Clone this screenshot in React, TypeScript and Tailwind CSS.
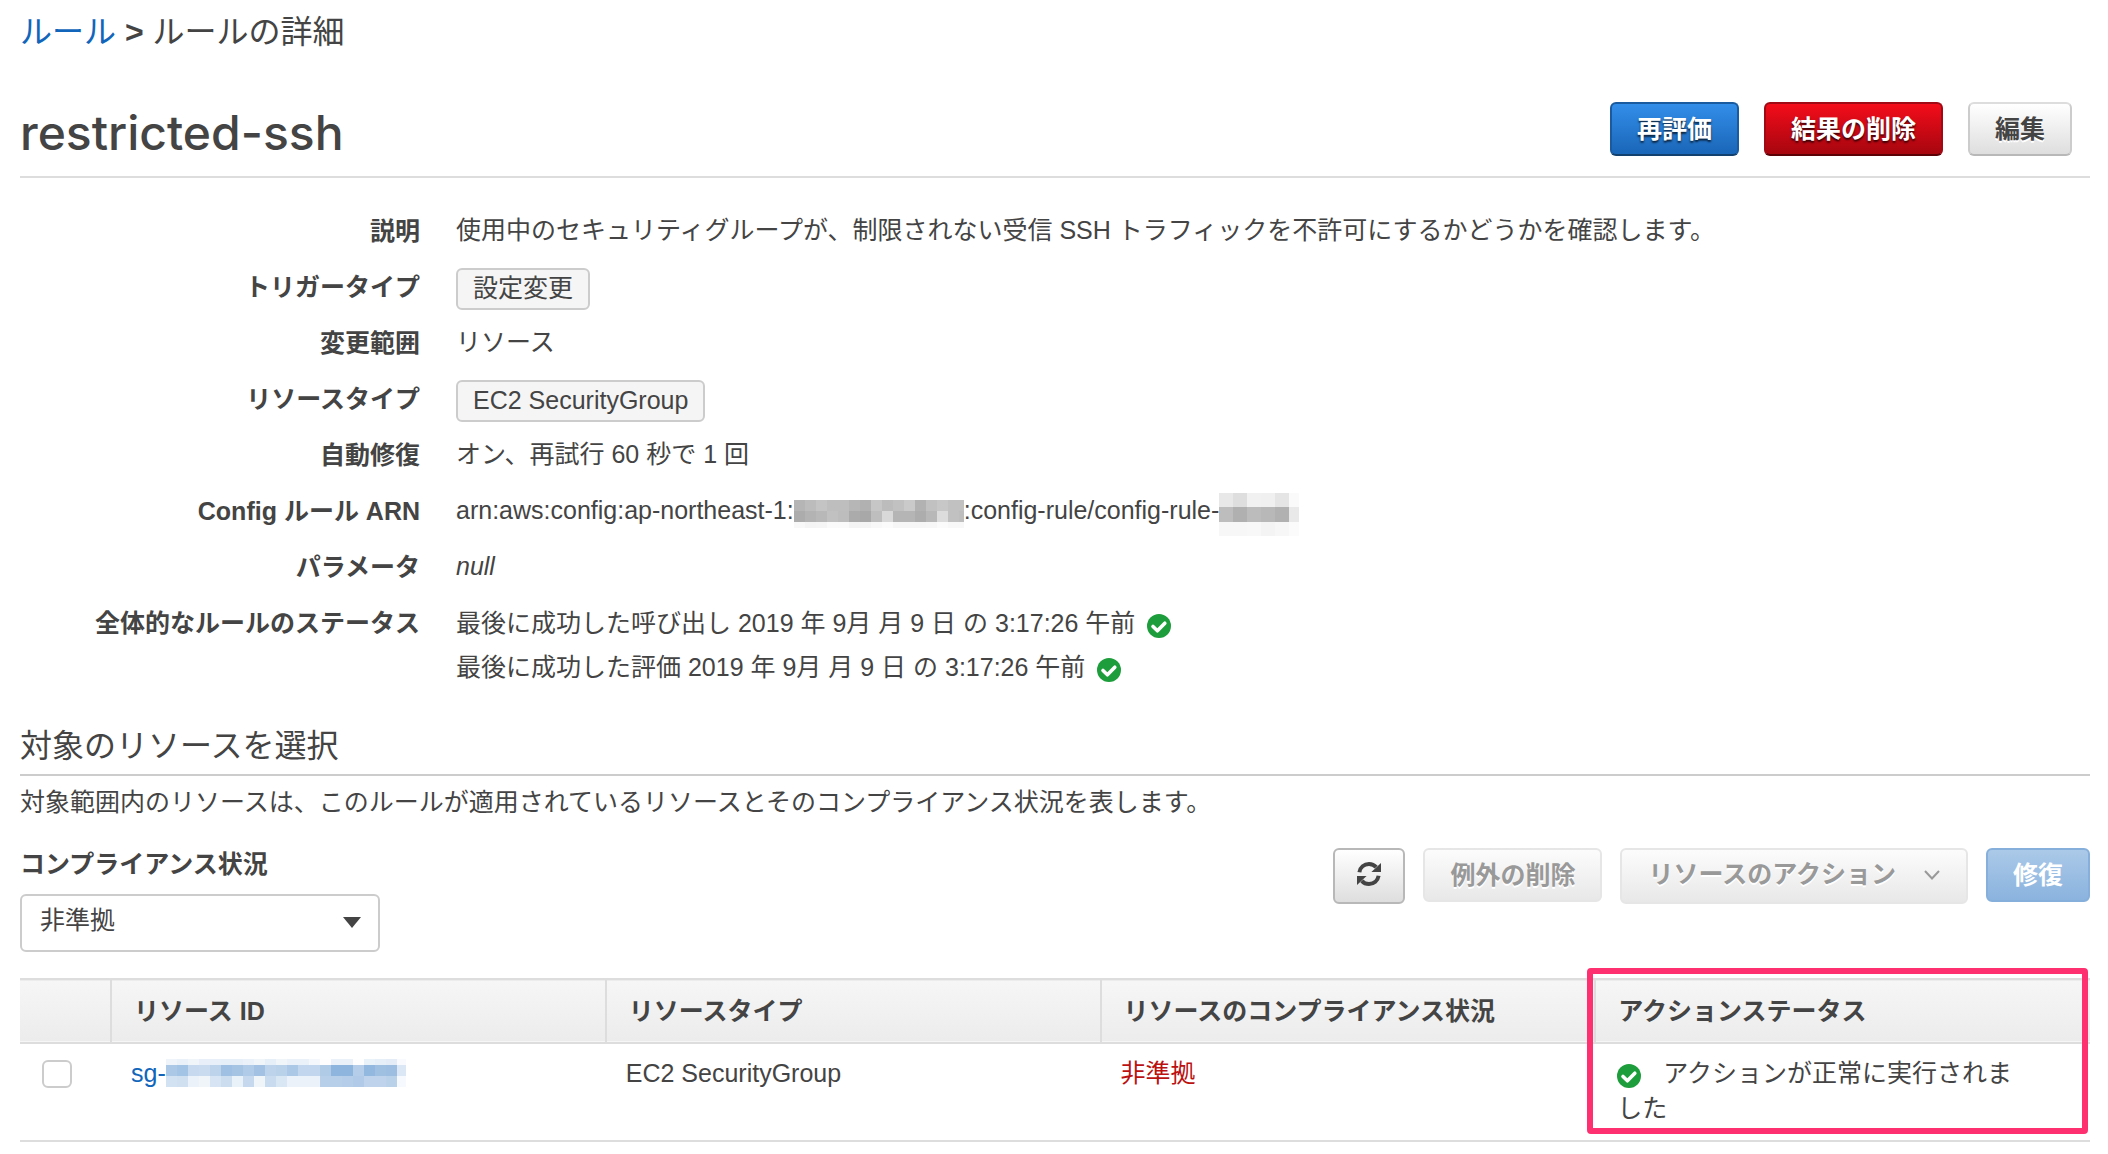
import React, { useState } from 'react';
import clsx from 'clsx';

type MosaicRow = { y: number; h: number; colors: string[] };

// Pixelated block that hides the private part of an identifier
function Mosaic({ width, height, cell, rows }: { width: number; height: number; cell: number; rows: MosaicRow[] }) {
  return (
    <svg width={width} height={height} viewBox={`0 0 ${width} ${height}`} shapeRendering="crispEdges" className="shrink-0" aria-hidden="true">
      {rows.map((row) =>
        row.colors.map((color, i) => (
          <rect key={`${row.y}-${i}`} x={i * cell} y={row.y} width={cell} height={row.h} fill={color} />
        ))
      )}
    </svg>
  );
}

const accountRows: MosaicRow[] = [
  { y: 13, h: 11, colors: ['#b5b5b5', '#bcbcbc', '#c4c4c4', '#bebebe', '#bebebe', '#b6b6b6', '#b1b1b1', '#c6c6c6', '#bcbcbc', '#c1c1c1', '#cacaca', '#b2b2b2', '#c1c1c1', '#c7c7c7', '#c1c1c1', '#c1c1c1'] },
  { y: 24, h: 11, colors: ['#acacac', '#b3b3b3', '#b8b8b8', '#c1c1c1', '#bdbdbd', '#ababab', '#a8a8a8', '#bebebe', '#d9d9d9', '#b5b5b5', '#b5b5b5', '#adadad', '#b8b8b8', '#dcdcdc', '#c1c1c1', '#bebebe'] },
  { y: 35, h: 6, colors: ['#f8f8f8', '#f4f4f4', '#f5f5f5', '#fafafa', '#fafafa', '#f4f4f4', '#f4f4f4', '#f8f8f8', '#fbfbfb', '#f6f6f6', '#f6f6f6', '#f6f6f6', '#f7f7f7', '#fbfbfb', '#f8f8f8', '#f8f8f8'] },
];

const ruleIdRows: MosaicRow[] = [
  { y: 6, h: 14, colors: ['#e8e8e8', '#dedede', '#f1f1f1', '#f0f0f0', '#e5e5e5', '#fafafa'] },
  { y: 20, h: 15, colors: ['#bdbdbd', '#b0b0b0', '#bcbcbc', '#b8b8b8', '#b1b1b1', '#e9e9e9'] },
  { y: 35, h: 14, colors: ['#f7f7f7', '#f7f7f7', '#f8f8f8', '#f4f4f4', '#f7f7f7', '#fbfbfb'] },
];

const groupIdRows: MosaicRow[] = [
  { y: 3, h: 6, colors: ['#eef4fa', '#eaf1f9', '#f0f5fa', '#e8eff8', '#e8eff8', '#e6eef8', '#e6eef8', '#eaf1f9', '#f0f5fa', '#e6eef8', '#f0f5fa', '#eaf1f9', '#eaf1f9', '#f4f8fc', '#fefefe', '#eaf1f9', '#eaf1f9', '#fefefe', '#eaf2f9', '#e6eef8', '#e4edf7', '#f8fafd'] },
  { y: 9, h: 11, colors: ['#abc9e6', '#a3c4e4', '#c6d9ee', '#c9dbef', '#bdd3eb', '#9fc0e2', '#a5c4e4', '#b0cbe8', '#a2c1e3', '#bcd3eb', '#bad1ea', '#abc8e6', '#c2d7ed', '#c2d7ed', '#b0cbe6', '#8eb5de', '#8eb5de', '#b5cde9', '#93b8df', '#a0c0e2', '#9dbde1', '#dbe7f4'] },
  { y: 20, h: 11, colors: ['#d3e2f2', '#d0e0f1', '#ecf2f9', '#f0f5fa', '#d7e4f3', '#ccddf0', '#e9f1f9', '#c6d8ee', '#f0f5fa', '#c9dbef', '#d9e6f4', '#ecf2f9', '#ecf2f9', '#ecf2f9', '#b7cfe9', '#b7cfe9', '#b5cde9', '#b0cae7', '#bfd4ec', '#bfd4ec', '#bad1ea', '#f6f9fd'] },
];

function CheckIcon({ className }: { className?: string }) {
  return (
    <svg width="24" height="24" viewBox="0 0 24 24" className={clsx('inline-block shrink-0', className)} aria-hidden="true">
      <circle cx="12" cy="12" r="12" fill="#1d9d3b" />
      <path d="M6 12.5l4.4 4.3 7.4-7.6" fill="none" stroke="#fff" strokeWidth="3.6" strokeLinecap="round" strokeLinejoin="round" />
    </svg>
  );
}

function RefreshIcon() {
  return (
    <svg width="24" height="24" viewBox="0 0 24 24" fill="none" aria-hidden="true">
      <path d="M2.4 10.2C3.2 5.3 7.2 2 12 2c2.900 0 5.400 1.200 7.200 3.200" stroke="#444" strokeWidth="4" />
      <path d="M24 1v9H14.400z" fill="#444" />
      <path d="M21.600 13.800C20.800 18.700 16.800 22 12 22c-2.900 0-5.400-1.200-7.200-3.200" stroke="#444" strokeWidth="4" />
      <path d="M0 23v-9h9.600z" fill="#444" />
    </svg>
  );
}

const buttonBase = 'rounded-md border-2 h-[54px] px-[25px] font-bold leading-8 bg-gradient-to-b';
const grayDisabled = 'border-[#e6e6e6] from-[#fcfcfc] to-[#e8e8e8] text-[#999] [text-shadow:0_2px_0_#fff]';

function Tag({ children }: { children: React.ReactNode }) {
  return (
    <span className="mt-1 flex h-[42px] items-center rounded-md border-2 border-[#ccc] bg-[#f5f5f5] px-[15px]">
      {children}
    </span>
  );
}

function DetailRow({ label, children }: { label: string; children: React.ReactNode }) {
  return (
    <div className="flex gap-9">
      <dt className="w-[400px] shrink-0 text-right font-bold leading-[56px]">{label}</dt>
      <dd className="flex min-h-[56px] items-center">{children}</dd>
    </div>
  );
}

const columns = ['リソース ID', 'リソースタイプ', 'リソースのコンプライアンス状況', 'アクションステータス'];

export default function App() {
  const [compliance, setCompliance] = useState('noncompliant');
  const [selected, setSelected] = useState(false);

  return (
    <main
      lang="ja"
      className="min-h-screen bg-white pt-3 pr-[18px] pl-5 text-[25px] text-[#444] font-['Liberation_Sans','Noto_Sans_CJK_JP',sans-serif]"
    >
      <nav className="text-[32px] leading-10">
        <a href="#rules" className="text-[#1166bb]">ルール</a> <span className="font-bold">&gt;</span> ルールの詳細
      </nav>

      <header className="mt-[50px] flex items-start justify-between border-b-2 border-[#ddd] pr-[18px] pb-4">
        <h1 className="mt-1 text-[48px] font-medium leading-[54px] font-['Inter','Liberation_Sans',sans-serif]">restricted-ssh</h1>
        <div className="flex gap-[25px]">
          <button type="button" className={clsx(buttonBase, 'border-[#1a5a9e] border-b-[#12406f] from-[#338ee9] to-[#1a66b8] text-white [text-shadow:0_2px_2px_rgba(0,0,0,0.7)]')}>
            再評価
          </button>
          <button type="button" className={clsx(buttonBase, 'border-[#a00a14] border-b-[#5c0207] from-[#f40d1a] to-[#a6060f] text-white [text-shadow:0_2px_2px_rgba(0,0,0,0.7)]')}>
            結果の削除
          </button>
          <button type="button" className={clsx(buttonBase, 'border-[#ccc] border-t-[#ddd] border-b-[#b8b8b8] from-white to-[#dedede] [text-shadow:0_2px_0_#fff]')}>
            編集
          </button>
        </div>
      </header>

      <dl className="pt-[25px]">
        <DetailRow label="説明">
          使用中のセキュリティグループが、制限されない受信 SSH トラフィックを不許可にするかどうかを確認します。
        </DetailRow>
        <DetailRow label="トリガータイプ">
          <Tag>設定変更</Tag>
        </DetailRow>
        <DetailRow label="変更範囲">リソース</DetailRow>
        <DetailRow label="リソースタイプ">
          <Tag>EC2 SecurityGroup</Tag>
        </DetailRow>
        <DetailRow label="自動修復">オン、再試行 60 秒で 1 回</DetailRow>
        <DetailRow label="Config ルール ARN">
          <span>arn:aws:config:ap-northeast-1:</span>
          <Mosaic width={170} height={48} cell={11} rows={accountRows} />
          <span>:config-rule/config-rule-</span>
          <Mosaic width={80} height={49} cell={14} rows={ruleIdRows} />
        </DetailRow>
        <DetailRow label="パラメータ">
          <em>null</em>
        </DetailRow>
        <DetailRow label="全体的なルールのステータス">
          <div className="pt-[6px] leading-[44px]">
            <p className="flex items-center gap-3">
              最後に成功した呼び出し 2019 年 9月 月 9 日 の 3:17:26 午前
              <CheckIcon className="mt-1.5" />
            </p>
            <p className="flex items-center gap-3">
              最後に成功した評価 2019 年 9月 月 9 日 の 3:17:26 午前
              <CheckIcon className="mt-1.5" />
            </p>
          </div>
        </DetailRow>
      </dl>

      <section className="mt-[37px]">
        <h2 className="border-b-2 border-[#ccc] pb-2 text-[32px] leading-10">対象のリソースを選択</h2>
        <p className="mt-2 leading-9">
          対象範囲内のリソースは、このルールが適用されているリソースとそのコンプライアンス状況を表します。
        </p>

        <div className="mt-7 flex items-start justify-between">
          <div>
            <label htmlFor="compliance" className="block font-bold leading-8">コンプライアンス状況</label>
            <div className="relative mt-[14px] w-[360px]">
              <select
                id="compliance"
                value={compliance}
                onChange={(e) => setCompliance(e.target.value)}
                className="h-[58px] w-full appearance-none rounded-md border-2 border-[#ccc] bg-white px-[18px] pb-1"
              >
                <option value="noncompliant">非準拠</option>
                <option value="compliant">準拠</option>
              </select>
              <svg width="18" height="11" viewBox="0 0 18 11" className="pointer-events-none absolute top-[23px] right-[19px]" aria-hidden="true">
                <path d="M0 0h18L9 11z" fill="#444" />
              </svg>
            </div>
          </div>

          <div className="flex items-start gap-[18px]">
            <button type="button" aria-label="更新" className="flex h-14 w-[72px] items-center justify-center rounded-md border-2 border-[#b8b8b8] bg-gradient-to-b from-white to-[#dedede] pb-1">
              <RefreshIcon />
            </button>
            <button type="button" disabled className={clsx(buttonBase, grayDisabled)}>
              例外の削除
            </button>
            <button type="button" disabled className={clsx('flex h-14 items-center rounded-md border-2 bg-gradient-to-b px-[26px] pb-[2px] font-bold', grayDisabled)}>
              リソースのアクション
              <svg width="16" height="10" viewBox="0 0 16 10" className="ml-7" fill="none" aria-hidden="true">
                <path d="M1 1l7 7.500L15 1" stroke="#999" strokeWidth="2" />
              </svg>
            </button>
            <button type="button" disabled className={clsx(buttonBase, 'border-[#86b0db] from-[#abc9e8] to-[#8ab3de] text-white')}>
              修復
            </button>
          </div>
        </div>

        <div className="relative mt-[26px]">
          <table className="w-full table-fixed border-collapse">
            <colgroup>
              <col className="w-[91px]" />
              <col />
              <col />
              <col />
              <col />
            </colgroup>
            <thead>
              <tr className="h-16 border-y-2 border-[#ddd] bg-gradient-to-b from-[#f6f6f6] to-[#ececec]">
                <td className="border-r-2 border-[#ddd]" />
                {columns.map((column) => (
                  <th key={column} scope="col" className="border-r-2 border-[#ddd] px-[22px] text-left font-bold leading-8 last:border-r-0">
                    {column}
                  </th>
                ))}
              </tr>
            </thead>
            <tbody>
              <tr className="h-[98px] border-b-2 border-[#ddd] align-top leading-[35px]">
                <td className="pt-4 pl-[22px]">
                  <input
                    type="checkbox"
                    aria-label="リソースを選択"
                    checked={selected}
                    onChange={(e) => setSelected(e.target.checked)}
                    className="block h-7 w-[30px] appearance-none rounded-md border-2 border-[#ccc] bg-white checked:bg-[#1166bb]"
                  />
                </td>
                <td className="px-5 pt-3">
                  <a href="#resource" className="flex items-center text-[#1166bb]">
                    sg-
                    <Mosaic width={240} height={35} cell={11} rows={groupIdRows} />
                  </a>
                </td>
                <td className="px-5 pt-3">EC2 SecurityGroup</td>
                <td className="px-5 pt-3 text-[#bb1111]">非準拠</td>
                <td className="pt-3 pr-[60px] pl-[22px]">
                  <CheckIcon className="mr-[22px] align-[-6px]" />
                  アクションが正常に実行されました
                </td>
              </tr>
            </tbody>
          </table>
          {/* highlight frame around the action status column */}
          <div className="pointer-events-none absolute -top-[10px] right-[2px] bottom-2 w-[501px] rounded-sm border-[6px] border-[#ff3070]" />
        </div>
      </section>
    </main>
  );
}
